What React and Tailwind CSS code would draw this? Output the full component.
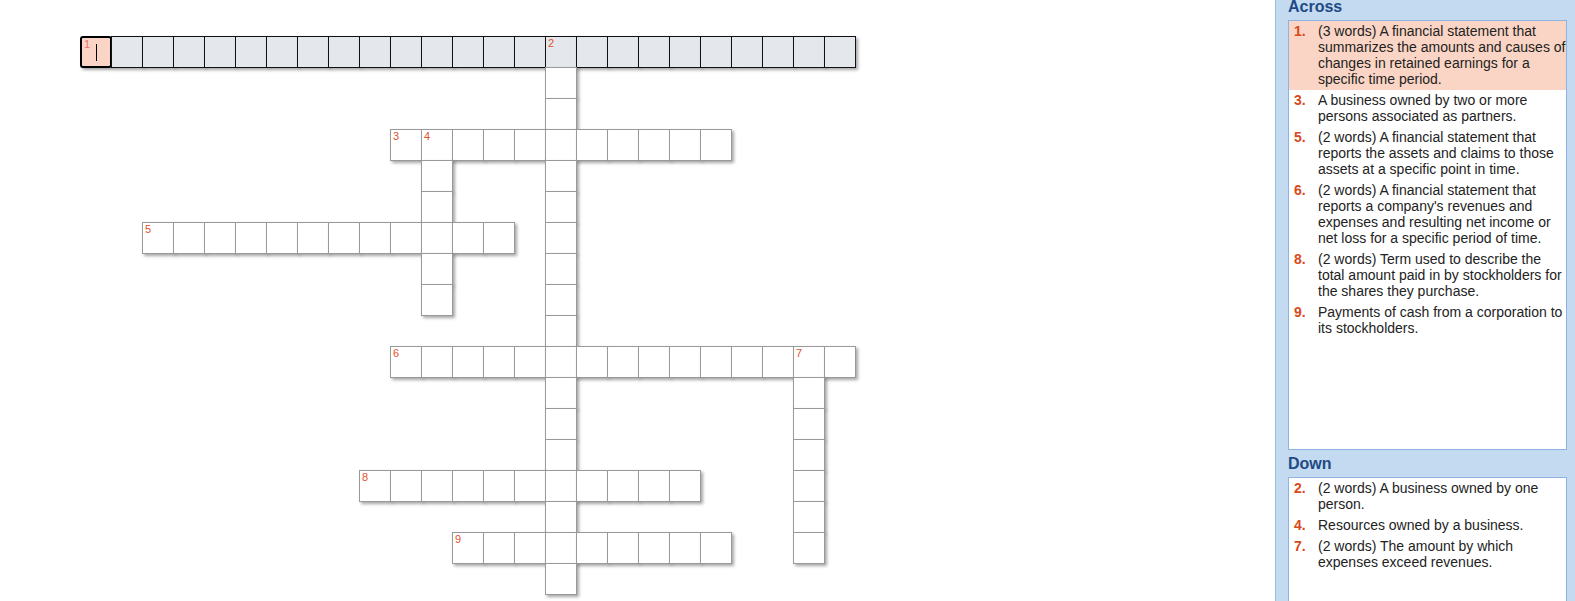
import React from "react";

const COLS = 25;
const ROWS = 18;

const words = [
  { r: 0, c: 0, len: 25, dir: "a" },
  { r: 0, c: 15, len: 18, dir: "d" },
  { r: 3, c: 10, len: 11, dir: "a" },
  { r: 3, c: 11, len: 6, dir: "d" },
  { r: 6, c: 2, len: 12, dir: "a" },
  { r: 10, c: 10, len: 15, dir: "a" },
  { r: 10, c: 23, len: 7, dir: "d" },
  { r: 14, c: 9, len: 11, dir: "a" },
  { r: 16, c: 12, len: 9, dir: "a" },
];

const numbers = {
  "0-0": 1,
  "0-15": 2,
  "3-10": 3,
  "3-11": 4,
  "6-2": 5,
  "10-10": 6,
  "10-23": 7,
  "14-9": 8,
  "16-12": 9,
};

const filled = new Set();
words.forEach((w) => {
  for (let i = 0; i < w.len; i++) {
    const r = w.dir === "a" ? w.r : w.r + i;
    const c = w.dir === "a" ? w.c + i : w.c;
    filled.add(`${r}-${c}`);
  }
});

const across = [
  {
    n: 1,
    t: "(3 words) A financial statement that summarizes the amounts and causes of changes in retained earnings for a specific time period.",
    active: true,
  },
  { n: 3, t: "A business owned by two or more persons associated as partners." },
  {
    n: 5,
    t: "(2 words) A financial statement that reports the assets and claims to those assets at a specific point in time.",
  },
  {
    n: 6,
    t: "(2 words) A financial statement that reports a company's revenues and expenses and resulting net income or net loss for a specific period of time.",
  },
  {
    n: 8,
    t: "(2 words) Term used to describe the total amount paid in by stockholders for the shares they purchase.",
  },
  { n: 9, t: "Payments of cash from a corporation to its stockholders." },
];

const down = [
  { n: 2, t: "(2 words) A business owned by one person." },
  { n: 4, t: "Resources owned by a business." },
  { n: 7, t: "(2 words) The amount by which expenses exceed revenues." },
];

function Cell({ r, c }) {
  const key = `${r}-${c}`;
  if (!filled.has(key)) return <div />;
  const num = numbers[key];
  const selected = r === 0;
  const focused = r === 0 && c === 0;
  let cls =
    "relative w-[32px] h-[32px] shadow-[2px_2px_3px_rgba(0,0,0,0.35)] flex items-center justify-center ";
  if (focused) {
    cls += "border-2 border-black rounded-[3px] bg-[#fad5c6]";
  } else if (selected) {
    cls += "border border-[#111111] bg-[#e4e8ec]";
  } else {
    cls += "border border-[#999999] bg-white";
  }
  return (
    <div className={cls}>
      {num && (
        <span
          className={
            "absolute top-[1px] left-[2px] text-[11px] leading-[11px] " +
            (focused ? "text-[#e8706a] left-[1px] top-0" : "text-[#e2531f]")
          }
        >
          {num}
        </span>
      )}
      {focused && <div className="w-px h-[17px] bg-black ml-[1px]" />}
    </div>
  );
}

function ClueList({ items, height }) {
  return (
    <div className={"bg-white border border-[#8fb3e0] w-[279px] " + height}>
      <ul>
        {items.map((it) => (
          <li
            key={it.n}
            className={
              "flex pl-[5px] pt-[2px] pb-[3px] text-[14px] leading-[16px] " +
              (it.active ? "bg-[#fad5c5]" : "")
            }
          >
            <span className="w-[24px] shrink-0 font-bold text-[#d84a1b]">{it.n}.</span>
            <span className="w-[248px] shrink-0 text-[#222222]">{it.t}</span>
          </li>
        ))}
      </ul>
    </div>
  );
}

export default function App() {
  const cells = [];
  for (let r = 0; r < ROWS; r++) {
    for (let c = 0; c < COLS; c++) {
      cells.push(<Cell key={`${r}-${c}`} r={r} c={c} />);
    }
  }
  return (
    <div
      className="flex w-[1575px] h-[601px] overflow-hidden bg-white"
      style={{ fontFamily: '"Liberation Sans", Arial, sans-serif' }}
    >
      <div className="flex-1 pl-[80px] pt-[36px]">
        <div className="grid grid-cols-[repeat(25,31px)] grid-rows-[repeat(18,31px)]">
          {cells}
        </div>
      </div>
      <aside className="w-[300px] shrink-0 h-[601px] bg-[#c4daf0] border-l border-[#9cbde3] pl-[12px]">
        <div className="text-[16px] font-bold leading-[14px] pb-[6px] text-[#1e4a85]">Across</div>
        <ClueList items={across} height="h-[430px]" />
        <div className="mt-[7px] text-[16px] font-bold leading-[14px] pb-[6px] text-[#1e4a85]">Down</div>
        <ClueList items={down} height="h-[200px]" />
      </aside>
    </div>
  );
}
